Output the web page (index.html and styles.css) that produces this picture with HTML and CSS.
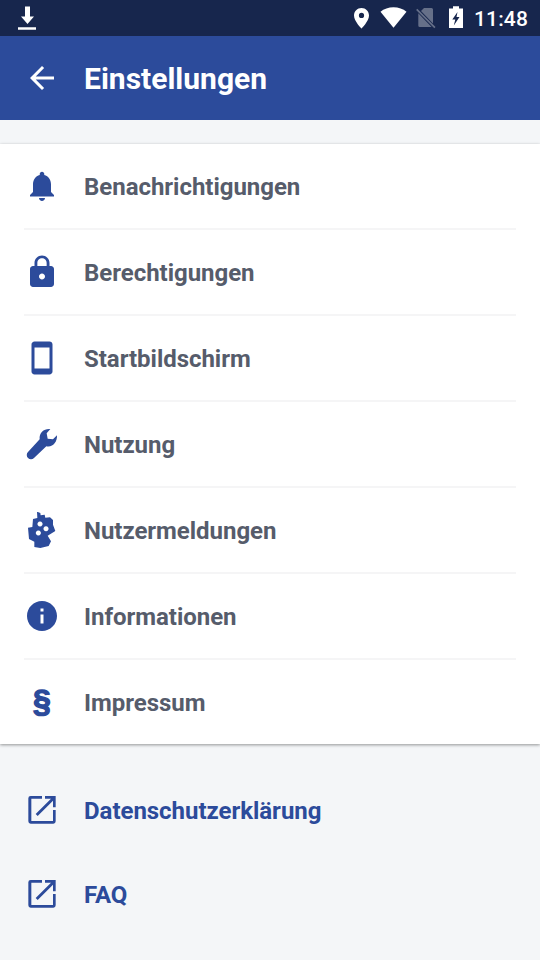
FILE: index.html
```html
<!DOCTYPE html>
<html lang="de">
<head>
<meta charset="utf-8">
<title>Einstellungen</title>
<link rel="stylesheet" href="styles.css">
</head>
<body>
<div class="status">
  <svg class="download" width="18" height="25" viewBox="0 0 18 25"><path d="M7 .5h5v10h4L9.500 18 3 10.500h4zM0 21.300h18v2.500H0z"/></svg>
  <div class="status-icons">
    <svg width="126" height="36" viewBox="0 0 126 36">
      <path fill-rule="evenodd" d="M13.500 8C9.300 8 6 11.300 6 15.400 6 21 13.500 28.500 13.500 28.500S21 21 21 15.400C21 11.300 17.700 8 13.500 8zm0 4.800a2.600 2.600 0 1 1 0 5.200 2.600 2.600 0 0 1 0-5.200z"/>
      <path d="M32.500 11.800C36 8.800 40.500 7.300 45.500 7.300s9.500 1.500 13 4.500l-13 16z"/>
      <g opacity=".34"><path d="M76 8h7.500q1.500 0 1.500 1.500v14L73 11zM70.300 13.300 83.600 27H71.800q-1.500 0-1.500-1.500zM69.300 8.800 87.500 27 86.300 28.200 68.100 10z"/></g>
      <path fill-rule="evenodd" d="M101 8.500h4V6.300h6v2.200h4V28h-14zm8.500 3.500-5.200 7.500h3l-1.500 6 5.700-8.500h-3z"/>
    </svg>
  </div>
  <span class="time">11:48</span>
</div>
<header class="bar">
  <svg class="icon" viewBox="0 0 24 24"><path d="M20 11H7.830l5.590-5.590L12 4l-8 8 8 8 1.410-1.410L7.830 13H20v-2z"/></svg>
  <h1>Einstellungen</h1>
</header>
<main>
  <ul class="card">
    <li><svg class="icon" viewBox="0 0 24 24"><path d="M12 22c1.100 0 2-.9 2-2h-4c0 1.100.9 2 2 2zm6-6v-5c0-3.070-1.630-5.640-4.500-6.320V4c0-.83-.67-1.500-1.500-1.500s-1.500.67-1.500 1.500v.68C7.640 5.360 6 7.920 6 11v5l-2 2v1h16v-1l-2-2z"/></svg><span>Benachrichtigungen</span></li>
    <li><svg class="icon" viewBox="0 0 24 24"><path d="M18 8h-1V6c0-2.760-2.240-5-5-5S7 3.240 7 6v2H6c-1.100 0-2 .9-2 2v10c0 1.100.9 2 2 2h12c1.100 0 2-.9 2-2V10c0-1.100-.9-2-2-2zm-6 9c-1.100 0-2-.9-2-2s.9-2 2-2 2 .9 2 2-.9 2-2 2zm3.100-9H8.900V6c0-1.710 1.390-3.100 3.100-3.100 1.710 0 3.100 1.390 3.100 3.100v2z"/></svg><span>Berechtigungen</span></li>
    <li><svg class="icon" viewBox="0 0 24 24"><path d="M17 1.010L7 1c-1.100 0-2 .9-2 2v18c0 1.100.9 2 2 2h10c1.100 0 2-.9 2-2V3c0-1.100-.9-1.990-2-1.990zM17 19H7V5h10v14z"/></svg><span>Startbildschirm</span></li>
    <li><svg class="icon" viewBox="72 318 108 108"><path d="M151 327C133 325 117 336 119 358L84 396A12 12 0 0 0 102 414L139 379C159 383 172 366 171 346L159 358 143 356 140 340Z"/></svg><span>Nutzung</span></li>
    <li><svg class="icon" viewBox="72 36 108 108"><path fill-rule="evenodd" d="M111 35L121 39 122 46 134 44 136 53 150 52 159 60 159 74 166 93 143 107 153 124 146 138 121 144 103 141 103 125 87 117 84 83 97 81 99 57 112 54zM120 64.500a7.500 7.500 0 1 0 .1 0zM138 78.500a7.500 7.500 0 1 0 .1 0zM115 91.500a7.500 7.500 0 1 0 .1 0z"/></svg><span>Nutzermeldungen</span></li>
    <li><svg class="icon" viewBox="0 0 24 24"><path d="M12 2C6.480 2 2 6.480 2 12s4.480 10 10 10 10-4.480 10-10S17.520 2 12 2zm1 15h-2v-6h2v6zm0-8h-2V7h2v2z"/></svg><span>Informationen</span></li>
    <li><b class="icon section">§</b><span>Impressum</span></li>
  </ul>
  <ul class="links">
    <li><svg class="icon" viewBox="72 36 108 108"><path d="M126 48H92q-7 0-7 7v69q0 7 7 7h68q7 0 7-7V90h-8v33H94V56h32zM135 48h32v34h-8V62l-46 46-6-6 46-46h-18z"/></svg><span>Datenschutzerklärung</span></li>
    <li><svg class="icon" viewBox="72 36 108 108"><path d="M126 48H92q-7 0-7 7v69q0 7 7 7h68q7 0 7-7V90h-8v33H94V56h32zM135 48h32v34h-8V62l-46 46-6-6 46-46h-18z"/></svg><span>FAQ</span></li>
  </ul>
</main>
</body>
</html>
```
FILE: styles.css
```css
* { box-sizing: border-box; }
body {
  margin: 0;
  height: 960px;
  overflow: hidden;
  background: #f4f6f8;
  font-family: Roboto, sans-serif;
}
svg { display: block; fill: currentColor; flex: none; }
.status {
  height: 36px;
  display: flex;
  background: #17264d;
  color: #fff;
}
.download { margin: 6px auto 0 18px; }
.status-icons { width: 126px; }
.time {
  width: 66px;
  line-height: 39px;
  font-size: 21px;
  font-weight: 500;
  letter-spacing: .15px;
}
.bar {
  height: 84px;
  padding: 0 24px;
  display: flex;
  align-items: center;
  gap: 24px;
  background: #2c4b9b;
  color: #fff;
}
h1 { margin: 0; font-size: 30px; line-height: 36px; padding-top: 2px; }
.icon { width: 36px; height: 36px; color: #2c4b9b; }
.bar .icon { color: #fff; }
ul { margin: 0; padding: 0; list-style: none; }
li {
  height: 84px;
  display: flex;
  align-items: center;
  gap: 24px;
  font-size: 24px;
  font-weight: 700;
  letter-spacing: -.03px;
}
li span { padding-top: 2px; }
.card {
  margin-top: 24px;
  padding: 0 24px;
  background: #fff;
  color: #565c6b;
  box-shadow: 0 1px 3px rgba(0, 0, 0, .4);
}
.card li + li { height: 86px; border-top: 2px solid #f5f5f6; }
.section {
  font-family: "Liberation Sans", sans-serif;
  font-size: 32px;
  line-height: 34px;
  text-align: center;
  -webkit-text-stroke: 1.4px currentColor;
}
.links { padding: 24px 24px 0; color: #2c4b9b; }
```
